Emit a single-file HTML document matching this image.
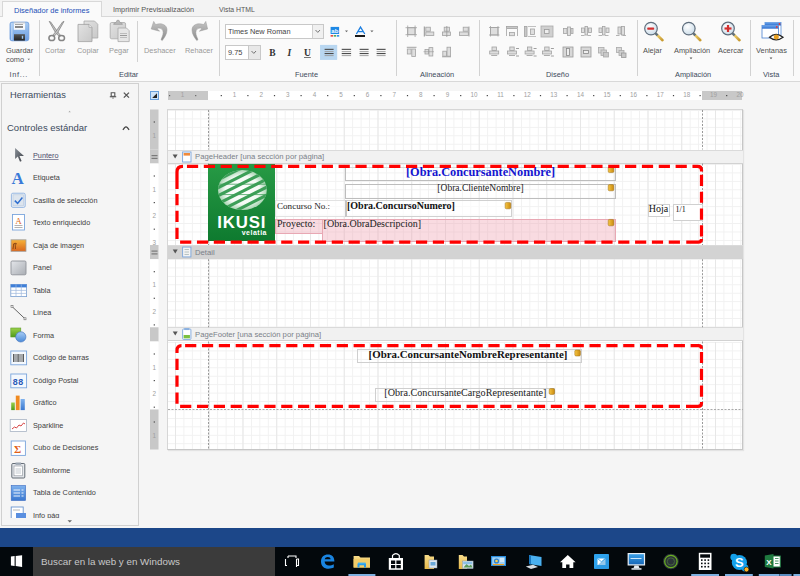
<!DOCTYPE html>
<html><head><meta charset="utf-8">
<style>
*{box-sizing:border-box;margin:0;padding:0}
html,body{width:800px;height:576px;overflow:hidden;background:#f5f5f5;font-family:"Liberation Sans",sans-serif;color:#333}
.a{position:absolute}
.t{position:absolute;white-space:nowrap;line-height:1}
.sep{position:absolute;width:1px;background:#d2d2d2}
.rl{font-size:7.4px;color:#505050}
.dis{color:#999}
.pi{font-size:7.3px;color:#404040}
.hd{font-size:7.7px;color:#7a7f88}
.grid{background-image:linear-gradient(to right,#e7e7e7 1px,transparent 1px),linear-gradient(to right,#f1f1f1 1px,transparent 1px),linear-gradient(to bottom,#f1f1f1 1px,transparent 1px);background-size:33.76px 100%,8.44px 100%,100% 8.44px}
.gl{font-size:7.4px;color:#404a5a}
</style></head><body>
<!-- tabs -->
<div class="a" style="left:0;top:0;width:800px;height:17px;background:#f3f3f3"></div>
<div class="a" style="left:0;top:16px;width:800px;height:1px;background:#d8d8d8"></div>
<div class="a" style="left:2px;top:1px;width:100px;height:16px;background:#fafafa;border:1px solid #d8d8d8;border-bottom:none"></div>
<div class="t" style="left:14px;top:6.5px;font-size:7.5px;color:#2350b8">Diseñador de informes</div>
<div class="t" style="left:113px;top:6px;font-size:7.3px;color:#555">Imprimir Previsualización</div>
<div class="t" style="left:219px;top:7.2px;font-size:6.9px;color:#555">Vista HTML</div>
<!-- ribbon -->
<div class="a" style="left:0;top:17px;width:800px;height:64px;background:#fafafa"></div>
<div class="a" style="left:0;top:81px;width:800px;height:1px;background:#d8d8d8"></div>

<div class="sep" style="left:39px;top:20px;height:56px"></div>
<div class="sep" style="left:137px;top:21px;height:41px"></div>
<div class="sep" style="left:219px;top:20px;height:56px"></div>
<div class="sep" style="left:396px;top:20px;height:56px"></div>
<div class="sep" style="left:479px;top:20px;height:56px"></div>
<div class="sep" style="left:637px;top:20px;height:56px"></div>
<div class="sep" style="left:750px;top:20px;height:56px"></div>
<div class="sep" style="left:793px;top:20px;height:56px"></div>

<div class="t rl" style="left:6px;top:47px">Guardar</div>
<div class="t rl" style="left:6px;top:56px">como</div>
<div class="t gl" style="left:9.5px;top:71px;letter-spacing:0.7px">Inf...</div>
<div class="t rl dis" style="left:45px;top:47px">Cortar</div>
<div class="t rl dis" style="left:77px;top:47px">Copiar</div>
<div class="t rl dis" style="left:109px;top:47px">Pegar</div>
<div class="t gl" style="left:119px;top:71px">Editar</div>
<div class="t rl dis" style="left:144px;top:47px">Deshacer</div>
<div class="t rl dis" style="left:185px;top:47px">Rehacer</div>
<div class="t gl" style="left:295px;top:71px">Fuente</div>
<div class="t gl" style="left:420px;top:71px">Alineación</div>
<div class="t gl" style="left:546px;top:71px">Diseño</div>
<div class="t rl" style="left:643px;top:47px">Alejar</div>
<div class="t rl" style="left:674px;top:47px">Ampliación</div>
<div class="t rl" style="left:718px;top:47px">Acercar</div>
<div class="t rl" style="left:756px;top:47px">Ventanas</div>
<div class="t gl" style="left:675px;top:71px">Ampliación</div>
<div class="t gl" style="left:763px;top:71px">Vista</div>

<!-- font combos -->
<div class="a" style="left:225px;top:24px;width:99px;height:15px;background:#fff;border:1px solid #c8c8c8"></div>
<div class="a" style="left:312px;top:25px;width:11px;height:13px;background:#f0f0f0;border-left:1px solid #d0d0d0"></div>
<div class="t" style="left:228px;top:28px;font-size:7.4px;color:#444">Times New Roman</div>
<div class="a" style="left:225px;top:45px;width:36px;height:15px;background:#fff;border:1px solid #c8c8c8"></div>
<div class="a" style="left:248px;top:46px;width:12px;height:13px;background:#e8e8e8;border-left:1px solid #c8c8c8"></div>
<div class="t" style="left:228px;top:49px;font-size:7.4px;color:#444">9.75</div>
<div class="a" style="left:320px;top:45px;width:17px;height:15px;background:#c5dcf2"></div>

<!-- ribbon icons -->
<svg class="a" style="left:0;top:0" width="800" height="82" viewBox="0 0 800 82">
<defs>
<linearGradient id="gBlue" x1="0" y1="0" x2="0" y2="1"><stop offset="0" stop-color="#a8cbf2"/><stop offset="1" stop-color="#6c9de0"/></linearGradient>
<linearGradient id="gDark" x1="0" y1="0" x2="0" y2="1"><stop offset="0" stop-color="#555"/><stop offset="1" stop-color="#222"/></linearGradient>
<linearGradient id="gGray" x1="0" y1="0" x2="1" y2="1"><stop offset="0" stop-color="#e2e2e2"/><stop offset="1" stop-color="#c8c8c8"/></linearGradient>
<linearGradient id="gArrow" x1="0" y1="0" x2="0" y2="1"><stop offset="0" stop-color="#c4c4c4"/><stop offset="1" stop-color="#8a8a8a"/></linearGradient>
<radialGradient id="gLens" cx="0.4" cy="0.35" r="0.7"><stop offset="0" stop-color="#ffffff"/><stop offset="1" stop-color="#c9dbe8"/></radialGradient>
<linearGradient id="gHandle" x1="0" y1="0" x2="1" y2="1"><stop offset="0" stop-color="#f5dc80"/><stop offset="1" stop-color="#c89a30"/></linearGradient>
<linearGradient id="gWin" x1="0" y1="0" x2="0" y2="1"><stop offset="0" stop-color="#6aa5ec"/><stop offset="1" stop-color="#2f6fcf"/></linearGradient>
</defs>
<!-- save -->
<rect x="10" y="22.1" width="18.8" height="18.7" rx="2" fill="url(#gBlue)" stroke="#6b9bdc" stroke-width="0.8"/>
<rect x="11" y="23" width="1.6" height="17" fill="#c4dcf8" opacity="0.7"/>
<rect x="13.8" y="22.5" width="11.3" height="7.3" fill="#f6f8fb"/>
<rect x="13.8" y="22.5" width="11.3" height="0.8" fill="#b8b8b8"/>
<rect x="15" y="24" width="8" height="0.9" fill="#9a9a9a"/>
<rect x="15" y="26.2" width="8" height="1.6" fill="#6a6a6a"/>
<rect x="14" y="34.2" width="10.9" height="6.4" fill="url(#gDark)"/>
<rect x="21.8" y="35.8" width="1.4" height="3" fill="#9cc8f0"/>
<!-- scissors -->
<g stroke="#7a7a7a" stroke-width="0.7" fill="#c4c4c4" stroke-linejoin="round">
<path d="M49.2 21.4 L50.6 21.9 L57.6 31.8 L60.4 35.2 L58.8 36 L55.4 32.4 Z"/>
<path d="M64 21.4 L62.6 21.9 L55.6 31.8 L52.8 35.2 L54.4 36 L57.8 32.4 Z"/>
</g>
<g stroke="#858585" stroke-width="1.5" fill="none">
<ellipse cx="51.8" cy="38" rx="2.9" ry="2.6"/><ellipse cx="61.6" cy="38" rx="2.9" ry="2.6"/>
</g>
<!-- copy -->
<path d="M84 21 H94.5 L97.8 24.3 V38 H84 Z" fill="url(#gGray)" stroke="#a8a8a8" stroke-width="0.8"/>
<path d="M78 24.4 H89 L92 27.4 V41.6 H78 Z" fill="url(#gGray)" stroke="#a0a0a0" stroke-width="0.8"/>
<path d="M89 24.4 V27.4 H92" fill="#f0f0f0" stroke="#a0a0a0" stroke-width="0.7"/>
<!-- paste -->
<rect x="110.2" y="22.5" width="15.4" height="16.3" rx="1.5" fill="url(#gGray)" stroke="#a8a8a8" stroke-width="0.8"/>
<path d="M113.6 24.4 Q113.6 22.6 116 22.6 L117 20.3 H119 L120 22.6 Q122.4 22.6 122.4 24.4 Z" fill="#b8b8b8" stroke="#999" stroke-width="0.6"/>
<path d="M118 28 H126.5 L129.2 30.7 V41.6 H118 Z" fill="#e6e6e6" stroke="#a8a8a8" stroke-width="0.8"/>
<rect x="120" y="33" width="7" height="0.7" fill="#aaa"/><rect x="120" y="35" width="7" height="1" fill="#999"/><rect x="120" y="37.3" width="7" height="0.7" fill="#aaa"/>
<!-- undo -->
<path d="M151.2 29 L153.7 21.4 L155.6 24.6 C161 22.5 167 24.5 167 30 C167 34 164.5 37.5 162.2 40.6 L161 39.6 C162.6 36 163.8 33 162.8 30.5 C161.8 28 158.5 27.5 157 28.6 L159.6 31.2 Z" fill="url(#gArrow)" stroke="#9a9a9a" stroke-width="0.5"/>
<!-- redo -->
<path d="M207.6 29 L205.8 21.4 L203.6 24.6 C198 22.5 192 24.5 192 30 C192 34 194.5 37.5 196.8 40.6 L198 39.6 C196.4 36 195.2 33 196.2 30.5 C197.2 28 200.5 27.5 202 28.6 L199.4 31.2 Z" fill="url(#gArrow)" stroke="#9a9a9a" stroke-width="0.5"/>
<!-- font combo arrows -->
<path d="M315.5 30 L317.8 32.4 L320 30" stroke="#666" stroke-width="0.9" fill="none"/>
<path d="M251.5 51 L253.8 53.4 L256 51" stroke="#666" stroke-width="0.9" fill="none"/>
<!-- highlight -->
<rect x="330.6" y="26.9" width="8.5" height="7.1" fill="#1e88e5"/>
<text x="331.3" y="33" font-family="Liberation Sans" font-size="6" font-weight="bold" fill="#fff">ab</text>
<rect x="330.6" y="35.1" width="2.4" height="1.5" fill="#e53935"/><rect x="333.7" y="35.1" width="2.4" height="1.5" fill="#43a047"/><rect x="336.8" y="35.1" width="2.4" height="1.5" fill="#1e88e5"/>
<path d="M345 30.6 H348 L346.5 32.2 Z" fill="#666"/>
<!-- font color A -->
<path d="M356.4 34 L360.5 27.1 L364.8 34 M358 31.6 H363" stroke="#1e7fe0" stroke-width="1.3" fill="none"/>
<rect x="355" y="35.1" width="10" height="1.8" fill="#000"/>
<path d="M370.3 30.6 H373.5 L371.9 32.2 Z" fill="#666"/>
<!-- B I U -->
<text x="269.2" y="56.3" font-family="Liberation Serif" font-size="9.5" font-weight="bold" fill="#333">B</text>
<text x="287.5" y="56.3" font-family="Liberation Serif" font-size="9.5" font-style="italic" font-weight="bold" fill="#333">I</text>
<text x="304" y="56" font-family="Liberation Serif" font-size="9.5" font-weight="bold" fill="#333">U</text>
<rect x="304" y="57.2" width="6.8" height="0.8" fill="#555"/>
<!-- align -->
<rect x="320.2" y="44.9" width="17" height="14.7" fill="#b9d7f1"/>
<g><rect x="324.6" y="48.8" width="9" height="1.1" fill="#4a4a4a"/><rect x="324.6" y="51.2" width="9" height="0.9" fill="#9a9a9a"/><rect x="324.6" y="53" width="9" height="1.1" fill="#4a4a4a"/><rect x="324.6" y="55.2" width="9" height="0.9" fill="#9a9a9a"/><rect x="341.7" y="48.8" width="9.4" height="1.1" fill="#4a4a4a"/><rect x="341.7" y="51.2" width="9.4" height="0.9" fill="#9a9a9a"/><rect x="341.7" y="53" width="9.4" height="1.1" fill="#4a4a4a"/><rect x="341.7" y="55.2" width="9.4" height="0.9" fill="#9a9a9a"/><rect x="359.6" y="48.8" width="9" height="1.1" fill="#4a4a4a"/><rect x="359.6" y="51.2" width="9" height="0.9" fill="#9a9a9a"/><rect x="359.6" y="53" width="9" height="1.1" fill="#4a4a4a"/><rect x="359.6" y="55.2" width="9" height="0.9" fill="#9a9a9a"/><rect x="376.6" y="48.8" width="9" height="1.1" fill="#4a4a4a"/><rect x="376.6" y="51.2" width="9" height="0.9" fill="#9a9a9a"/><rect x="376.6" y="53" width="9" height="1.1" fill="#4a4a4a"/><rect x="376.6" y="55.2" width="9" height="0.9" fill="#9a9a9a"/></g>
<!-- zoom lenses -->
<g>
<path d="M655.8 33.6 L662.5 40.2" stroke="url(#gHandle)" stroke-width="2.6" stroke-linecap="round"/>
<path d="M655.2 33 L657.6 35.4" stroke="#607080" stroke-width="2.4"/>
<circle cx="651" cy="28.6" r="6.3" fill="url(#gLens)" stroke="#5f6e7d" stroke-width="1.2"/>
<rect x="647.2" y="27.6" width="7" height="2.2" rx="0.8" fill="#d32f2f"/>
</g>
<g>
<path d="M693.6 33.6 L700.3 40.2" stroke="url(#gHandle)" stroke-width="2.6" stroke-linecap="round"/>
<path d="M693 33 L695.4 35.4" stroke="#607080" stroke-width="2.4"/>
<circle cx="688.8" cy="28.6" r="6.3" fill="url(#gLens)" stroke="#5f6e7d" stroke-width="1.2"/>
</g>
<g>
<path d="M732.8 33.6 L739.5 40.2" stroke="url(#gHandle)" stroke-width="2.6" stroke-linecap="round"/>
<path d="M732.2 33 L734.6 35.4" stroke="#607080" stroke-width="2.4"/>
<circle cx="728" cy="28.5" r="6.3" fill="url(#gLens)" stroke="#5f6e7d" stroke-width="1.2"/>
<rect x="724.5" y="27.4" width="7" height="2.2" fill="#d32f2f"/><rect x="726.9" y="25" width="2.2" height="7" fill="#d32f2f"/>
</g>
<!-- ventanas -->
<rect x="765" y="22.5" width="16" height="13" fill="#fff" stroke="#5b8fd8" stroke-width="0.8"/>
<rect x="765" y="22.5" width="16" height="3" fill="url(#gWin)"/>
<circle cx="779.5" cy="24" r="0.9" fill="#e53935"/>
<rect x="762" y="25.5" width="16.5" height="12.5" fill="#fff" stroke="#4a80d0" stroke-width="0.8"/>
<rect x="762" y="25.5" width="16.5" height="3.2" fill="url(#gWin)"/>
<circle cx="776.8" cy="27" r="0.9" fill="#e53935"/>
<path d="M769.5 37.2 Q776 31.5 783 37.2 Q776 42.5 769.5 37.2 Z" fill="#fff" stroke="#222" stroke-width="1.3"/>
<circle cx="776.3" cy="37" r="2.5" fill="#e8a020"/>
<!-- dropdown carets -->
<path d="M27.5 58.8 H30 L28.75 60 Z" fill="#666"/>
<path d="M689.6 57.6 H692.4 L691 59.2 Z" fill="#555"/>
<path d="M769.6 57.6 H772.4 L771 59.2 Z" fill="#555"/>
</svg>

<svg class="a" style="left:0;top:0" width="800" height="82" viewBox="0 0 800 82"><rect x="407.7" y="27.7" width="7.4" height="7" fill="#dedede" stroke="#a2a2a2" stroke-width="0.8"/><line x1="405.5" y1="27.7" x2="417" y2="27.7" stroke="#a2a2a2" stroke-width="0.8"/><line x1="405.5" y1="34.7" x2="417" y2="34.7" stroke="#a2a2a2" stroke-width="0.8"/><line x1="407.7" y1="25.5" x2="407.7" y2="37" stroke="#a2a2a2" stroke-width="0.8"/><line x1="415.1" y1="25.5" x2="415.1" y2="37" stroke="#a2a2a2" stroke-width="0.8"/><line x1="424.3" y1="26.5" x2="424.3" y2="36.5" stroke="#909090" stroke-width="1"/><rect x="425.8" y="27.2" width="4.5" height="4" fill="#dedede" stroke="#a2a2a2" stroke-width="0.8"/><rect x="425.8" y="32" width="8" height="3.5" fill="#dedede" stroke="#a2a2a2" stroke-width="0.8"/><rect x="444.2" y="27.2" width="5.2" height="4" fill="#dedede" stroke="#a2a2a2" stroke-width="0.8"/><rect x="442.4" y="32" width="8" height="3.5" fill="#dedede" stroke="#a2a2a2" stroke-width="0.8"/><line x1="446.8" y1="26" x2="446.8" y2="37" stroke="#999" stroke-width="0.8"/><rect x="463.2" y="27.2" width="5" height="4" fill="#dedede" stroke="#a2a2a2" stroke-width="0.8"/><rect x="459.5" y="32" width="8.8" height="3.5" fill="#dedede" stroke="#a2a2a2" stroke-width="0.8"/><line x1="469" y1="26.5" x2="469" y2="36.5" stroke="#909090" stroke-width="0.8"/><line x1="406.8" y1="47.3" x2="416.5" y2="47.3" stroke="#999" stroke-width="0.9"/><rect x="407.3" y="49" width="3.8" height="5" fill="#dedede" stroke="#a2a2a2" stroke-width="0.8"/><rect x="411.8" y="49" width="3.8" height="7.5" fill="#dedede" stroke="#a2a2a2" stroke-width="0.8"/><rect x="425" y="49.5" width="3.6" height="4.5" fill="#dedede" stroke="#a2a2a2" stroke-width="0.8"/><rect x="429" y="47.6" width="3.8" height="8.4" fill="#dedede" stroke="#a2a2a2" stroke-width="0.8"/><line x1="423.5" y1="51.7" x2="434" y2="51.7" stroke="#999" stroke-width="0.6"/><rect x="442.8" y="51.2" width="3.8" height="5" fill="#dedede" stroke="#a2a2a2" stroke-width="0.8"/><rect x="447" y="47.2" width="3.6" height="9" fill="#dedede" stroke="#a2a2a2" stroke-width="0.8"/><line x1="442" y1="56.8" x2="451" y2="56.8" stroke="#999" stroke-width="0.8"/><rect x="490.5" y="27.5" width="7.5" height="7.5" fill="#dedede" stroke="#a2a2a2" stroke-width="0.8"/><line x1="489" y1="27.5" x2="499.5" y2="27.5" stroke="#a2a2a2" stroke-width="0.8"/><line x1="489" y1="35" x2="499.5" y2="35" stroke="#a2a2a2" stroke-width="0.8"/><line x1="490.5" y1="26" x2="490.5" y2="36.5" stroke="#a2a2a2" stroke-width="0.8"/><line x1="498" y1="26" x2="498" y2="36.5" stroke="#a2a2a2" stroke-width="0.8"/><rect x="506.5" y="26.5" width="11" height="2" fill="#c8c8c8" stroke="#a2a2a2" stroke-width="0.8"/><line x1="506.5" y1="29" x2="506.5" y2="36" stroke="#a2a2a2" stroke-width="0.8"/><line x1="517.5" y1="29" x2="517.5" y2="36" stroke="#a2a2a2" stroke-width="0.8"/><rect x="509.5" y="32.5" width="5" height="3.2" fill="#dedede" stroke="#a2a2a2" stroke-width="0.8"/><rect x="524.5" y="26.5" width="2.5" height="10" fill="#c8c8c8" stroke="#a2a2a2" stroke-width="0.8"/><rect x="530.5" y="29" width="4" height="5.5" fill="#dedede" stroke="#a2a2a2" stroke-width="0.8"/><line x1="528" y1="26.5" x2="536" y2="26.5" stroke="#999" stroke-width="0.6"/><line x1="528" y1="36.5" x2="536" y2="36.5" stroke="#999" stroke-width="0.6"/><rect x="541" y="26" width="12" height="11" fill="#d0d0d0" stroke="#aaa" stroke-width="0.8"/><rect x="544.5" y="29.5" width="4.5" height="4" fill="#eee" stroke="#999" stroke-width="0.8"/><rect x="563.5" y="28.5" width="3.5" height="5" fill="#ddd" stroke="#a2a2a2" stroke-width="0.8"/><rect x="567.5" y="27" width="3" height="8.5" fill="#dedede" stroke="#a2a2a2" stroke-width="0.8"/><rect x="571" y="28.5" width="2" height="5" fill="#ddd" stroke="#a2a2a2" stroke-width="0.8"/><rect x="581.5" y="28" width="3" height="4.5" fill="#dedede" stroke="#a2a2a2" stroke-width="0.8"/><rect x="585" y="26.5" width="2.5" height="8.5" fill="#dedede" stroke="#a2a2a2" stroke-width="0.8"/><rect x="588.5" y="28" width="3" height="4.5" fill="#dedede" stroke="#a2a2a2" stroke-width="0.8"/><line x1="581" y1="35.5" x2="584.5" y2="35.5" stroke="#a2a2a2" stroke-width="0.8"/><line x1="587.5" y1="35.5" x2="591" y2="35.5" stroke="#a2a2a2" stroke-width="0.8"/><rect x="599" y="28" width="3" height="4.5" fill="#dedede" stroke="#a2a2a2" stroke-width="0.8"/><rect x="602.5" y="26.5" width="2.5" height="8.5" fill="#dedede" stroke="#a2a2a2" stroke-width="0.8"/><rect x="606" y="28" width="3" height="4.5" fill="#dedede" stroke="#a2a2a2" stroke-width="0.8"/><line x1="598.5" y1="35.5" x2="602" y2="35.5" stroke="#a2a2a2" stroke-width="0.8"/><line x1="605" y1="35.5" x2="608.5" y2="35.5" stroke="#a2a2a2" stroke-width="0.8"/><rect x="618" y="27" width="3" height="7" fill="#dedede" stroke="#a2a2a2" stroke-width="0.8"/><rect x="621.5" y="26.5" width="3" height="8.5" fill="#dedede" stroke="#a2a2a2" stroke-width="0.8"/><line x1="616" y1="35.5" x2="619.5" y2="35.5" stroke="#a2a2a2" stroke-width="0.8"/><line x1="622.5" y1="35.5" x2="626" y2="35.5" stroke="#a2a2a2" stroke-width="0.8"/><rect x="492.0" y="47" width="4.4" height="3.5" fill="#dedede" stroke="#a2a2a2" stroke-width="0.8"/><rect x="489.7" y="51" width="9" height="3" fill="#dedede" stroke="#a2a2a2" stroke-width="0.8"/><line x1="491.2" y1="55.5" x2="497.2" y2="55.5" stroke="#999" stroke-width="0.8"/><rect x="509.8" y="47" width="4.4" height="3.5" fill="#dedede" stroke="#a2a2a2" stroke-width="0.8"/><rect x="507.5" y="51" width="9" height="3" fill="#dedede" stroke="#a2a2a2" stroke-width="0.8"/><line x1="509" y1="55.5" x2="515" y2="55.5" stroke="#999" stroke-width="0.8"/><line x1="516" y1="48.5" x2="519" y2="48.5" stroke="#888" stroke-width="0.8"/><line x1="516" y1="56" x2="519" y2="56" stroke="#888" stroke-width="0.8"/><rect x="527.4" y="47" width="4.4" height="3.5" fill="#dedede" stroke="#a2a2a2" stroke-width="0.8"/><rect x="525.1" y="51" width="9" height="3" fill="#dedede" stroke="#a2a2a2" stroke-width="0.8"/><line x1="526.6" y1="55.5" x2="532.6" y2="55.5" stroke="#999" stroke-width="0.8"/><line x1="533.6" y1="48.5" x2="536.6" y2="48.5" stroke="#888" stroke-width="0.8"/><line x1="533.6" y1="56" x2="536.6" y2="56" stroke="#888" stroke-width="0.8"/><rect x="544.6999999999999" y="47" width="4.4" height="3.5" fill="#dedede" stroke="#a2a2a2" stroke-width="0.8"/><rect x="542.4" y="51" width="9" height="3" fill="#dedede" stroke="#a2a2a2" stroke-width="0.8"/><line x1="543.9" y1="55.5" x2="549.9" y2="55.5" stroke="#999" stroke-width="0.8"/><line x1="550.9" y1="48.5" x2="553.9" y2="48.5" stroke="#888" stroke-width="0.8"/><line x1="550.9" y1="56" x2="553.9" y2="56" stroke="#888" stroke-width="0.8"/><rect x="563" y="47" width="10" height="10" fill="#d8d8d8" stroke="#999" stroke-width="0.8"/><rect x="566.5" y="48.5" width="3" height="7" fill="#eee" stroke="#888" stroke-width="0.8"/><rect x="581" y="47" width="10" height="10" fill="#d8d8d8" stroke="#999" stroke-width="0.8"/><rect x="583.5" y="50.5" width="5" height="3" fill="#eee" stroke="#888" stroke-width="0.8"/><rect x="598.5" y="47.5" width="5.5" height="5.5" fill="#d8d8d8" stroke="#aaa" stroke-width="0.8"/><rect x="601" y="50" width="5.5" height="5.5" fill="#cfcfcf" stroke="#aaa" stroke-width="0.8"/><rect x="603.5" y="52.5" width="5" height="4.5" fill="#c8c8c8" stroke="#aaa" stroke-width="0.8"/><rect x="616.5" y="47.5" width="5" height="5" fill="#d8d8d8" stroke="#aaa" stroke-width="0.8"/><rect x="619" y="50.5" width="5" height="5" fill="#cfcfcf" stroke="#aaa" stroke-width="0.8"/><rect x="621.5" y="53" width="4.5" height="4.5" fill="#c8c8c8" stroke="#999" stroke-width="0.8"/></svg>

<!-- left panel -->
<div class="a" style="left:1px;top:83px;width:138px;height:443px;background:#f5f5f5;border:1px solid #d0d0d0"></div>
<div class="t" style="left:10px;top:91px;font-size:9.3px;color:#3c4a5c">Herramientas</div>
<div class="t" style="left:7px;top:123px;font-size:9.5px;color:#3c4a5c">Controles estándar</div>

<div class="a" style="left:2px;top:84px;width:136px;height:434px;overflow:hidden">
<div class="a" style="left:-2px;top:-84px;width:140px;height:526px">
<div class="t pi" style="left:33px;top:151.5px;text-decoration:underline;text-decoration-color:#8a8aa0;color:#4a4a6a;">Puntero</div>
<div class="t pi" style="left:33px;top:174.0px;">Etiqueta</div>
<div class="t pi" style="left:33px;top:196.5px;">Casilla de selección</div>
<div class="t pi" style="left:33px;top:219.0px;">Texto enriquecido</div>
<div class="t pi" style="left:33px;top:241.5px;">Caja de imagen</div>
<div class="t pi" style="left:33px;top:264.0px;">Panel</div>
<div class="t pi" style="left:33px;top:286.5px;">Tabla</div>
<div class="t pi" style="left:33px;top:309.0px;">Línea</div>
<div class="t pi" style="left:33px;top:331.5px;">Forma</div>
<div class="t pi" style="left:33px;top:354.0px;">Código de barras</div>
<div class="t pi" style="left:33px;top:376.5px;">Código Postal</div>
<div class="t pi" style="left:33px;top:399.0px;">Gráfico</div>
<div class="t pi" style="left:33px;top:421.5px;">Sparkline</div>
<div class="t pi" style="left:33px;top:444.0px;">Cubo de Decisiones</div>
<div class="t pi" style="left:33px;top:466.5px;">Subinforme</div>
<div class="t pi" style="left:33px;top:489.0px;">Tabla de Contenido</div>
<div class="t pi" style="left:33px;top:511.5px;">Info pág</div>

<svg class="a" style="left:0;top:140px" width="140" height="386" viewBox="0 140 140 386">
<defs>
<linearGradient id="pPtr" x1="0" y1="0" x2="1" y2="1"><stop offset="0" stop-color="#8a9098"/><stop offset="1" stop-color="#3c4046"/></linearGradient>
<linearGradient id="pPanel" x1="0" y1="0" x2="1" y2="1"><stop offset="0" stop-color="#e4e6ea"/><stop offset="1" stop-color="#a9adb3"/></linearGradient>
<linearGradient id="pImg" x1="0" y1="0" x2="0" y2="1"><stop offset="0" stop-color="#f6b23a"/><stop offset="1" stop-color="#d9661c"/></linearGradient>
<linearGradient id="pBlue" x1="0" y1="0" x2="0" y2="1"><stop offset="0" stop-color="#7fb2ee"/><stop offset="1" stop-color="#3a78d0"/></linearGradient>
<linearGradient id="pCirc" x1="0" y1="0" x2="0" y2="1"><stop offset="0" stop-color="#a9cdf5"/><stop offset="1" stop-color="#4a8ad8"/></linearGradient>
<linearGradient id="pGreen" x1="0" y1="0" x2="0" y2="1"><stop offset="0" stop-color="#9bd04a"/><stop offset="1" stop-color="#4f9a1a"/></linearGradient>
</defs>
<!-- pointer -->
<path d="M15.1 148 L15.1 159 L17.8 156.6 L20 161.8 L21.6 161 L19.5 156 L24 156 Z" fill="url(#pPtr)"/>
<!-- A label -->
<text x="11.6" y="184.2" font-family="Liberation Serif" font-size="17" font-weight="bold" fill="#3a7ad8">A</text>
<!-- checkbox -->
<rect x="11.4" y="193.2" width="13.8" height="14.2" rx="1.5" fill="#e8eef6" stroke="#8fb2e0" stroke-width="0.9"/>
<rect x="13" y="194.8" width="10.6" height="11" fill="#dde5ee" stroke="#b9c9dc" stroke-width="0.6"/>
<path d="M14.8 200.6 L17.6 203.4 L22.4 197.6" stroke="#2f6fd0" stroke-width="1.5" fill="none"/>
<!-- rich text -->
<rect x="12.5" y="214.5" width="12" height="15.5" fill="#fff" stroke="#7aa5dc" stroke-width="0.9"/>
<text x="15.2" y="224" font-family="Liberation Serif" font-size="9" fill="#e06a20">A</text>
<rect x="14.5" y="225.2" width="8" height="0.8" fill="#a0a0a0"/><rect x="14.5" y="227.2" width="8" height="0.8" fill="#a0a0a0"/>
<!-- image box -->
<rect x="11" y="239.8" width="15" height="11.5" fill="url(#pImg)" stroke="#a0a0a0" stroke-width="0.8"/>
<path d="M13 249 L13.8 244 M15.5 249 L15.2 243.5 M13 244.5 Q15 242 17 244" stroke="#7a3a10" stroke-width="0.8" fill="none"/>
<!-- panel -->
<rect x="11" y="261" width="15" height="13.8" rx="1.2" fill="url(#pPanel)" stroke="#8e9298" stroke-width="0.9"/>
<!-- table -->
<rect x="10.8" y="284.4" width="15.8" height="12.2" fill="#fff" stroke="#7a9fd0" stroke-width="0.8"/>
<rect x="10.8" y="284.4" width="15.8" height="3" fill="#3f7fd8"/>
<path d="M10.8 290.4 H26.6 M10.8 293.4 H26.6 M16 284.4 V296.6 M21.3 284.4 V296.6" stroke="#9db8dc" stroke-width="0.7"/>
<!-- line -->
<line x1="12" y1="306.5" x2="25" y2="318.8" stroke="#555" stroke-width="0.9"/>
<rect x="11" y="305.5" width="2" height="2" fill="#fff" stroke="#666" stroke-width="0.6"/>
<rect x="24" y="317.8" width="2" height="2" fill="#fff" stroke="#666" stroke-width="0.6"/>
<!-- shape -->
<rect x="10.8" y="328" width="10" height="9" fill="url(#pGreen)" stroke="#5a9a2a" stroke-width="0.6"/>
<circle cx="20.8" cy="336.9" r="5.1" fill="url(#pCirc)" stroke="#4a7ac0" stroke-width="0.7"/>
<!-- barcode -->
<rect x="10.8" y="351" width="15.8" height="13.8" fill="#f4f8fd" stroke="#7aa5dc" stroke-width="0.9"/>
<path d="M13.5 354 V362 M15 354 V362 M17 354 V362 M18.3 354 V362 M20 354 V362 M22 354 V362 M23.5 354 V362" stroke="#333" stroke-width="0.8"/>
<!-- postal -->
<rect x="10.8" y="374" width="15.8" height="13.8" fill="#f4f8fd" stroke="#7aa5dc" stroke-width="0.9"/>
<text x="12.6" y="384.6" font-family="Liberation Mono" font-size="9" font-weight="bold" fill="#2a5ab8">88</text>
<!-- chart -->
<rect x="11.2" y="402.5" width="3.6" height="7.6" fill="url(#pGreen)"/>
<rect x="15.8" y="395.6" width="3.8" height="14.5" fill="#f08a20"/>
<rect x="20.6" y="399" width="4.2" height="11.1" fill="url(#pBlue)"/>
<!-- sparkline -->
<rect x="10.2" y="419.5" width="16.4" height="12" fill="#fff" stroke="#a8b4c4" stroke-width="0.8"/>
<path d="M12 429 L14.5 427 L16.5 428 L19 425 L21 426 L23.5 423 L25 424" stroke="#d03030" stroke-width="0.9" fill="none"/>
<!-- cube sigma -->
<rect x="11.2" y="441" width="14.2" height="14.4" fill="#fff" stroke="#7aa5dc" stroke-width="0.9"/>
<text x="14" y="452.6" font-family="Liberation Serif" font-size="11" font-weight="bold" fill="#e0601a">Σ</text>
<!-- subreport -->
<rect x="11.8" y="463.5" width="13" height="14.5" rx="1" fill="#e4e7eb" stroke="#555d68" stroke-width="0.9"/>
<rect x="14" y="466" width="8.6" height="9.8" fill="#fff" stroke="#8a9098" stroke-width="0.6"/>
<rect x="15.5" y="462.5" width="5.6" height="2.3" fill="#9aa4b0"/>
<path d="M15.5 469 H21 M15.5 471 H21 M15.5 473 H21" stroke="#9aa4b0" stroke-width="0.6"/>
<!-- toc -->
<rect x="11.2" y="485.5" width="14.4" height="15" fill="url(#pBlue)" stroke="#3a6ac0" stroke-width="0.6"/>
<path d="M13.5 490 H20 M13.5 493 H20 M13.5 496 H20 M21.5 490 H23.5 M21.5 493 H23.5 M21.5 496 H23.5" stroke="#fff" stroke-width="0.9"/>
<!-- info pag (clipped) -->
<rect x="11.2" y="507" width="12" height="12" fill="#fff" stroke="#6a95d0" stroke-width="0.9"/>
<rect x="16" y="513" width="10" height="5" fill="#5a8fe0"/>
<path d="M13 510 H20" stroke="#999" stroke-width="0.7"/>
</svg>

</div></div>

<svg class="a" style="left:0;top:84px" width="140" height="60" viewBox="0 84 140 60">
<path d="M111.2 92.8 H114.8 V96.2 H111.2 Z" fill="#fff" stroke="#555" stroke-width="1.1"/><rect x="109.8" y="96.2" width="6.4" height="1.1" fill="#555"/><rect x="112.5" y="97.3" width="1" height="1.6" fill="#777"/>
<path d="M123.8 92.6 L129 97.6 M129 92.6 L123.8 97.6" stroke="#555" stroke-width="1.3"/>
<path d="M68.4 112.3 H70.8 L69.6 110.8 Z" fill="#aaa"/>
<path d="M122.9 129.8 L124.6 127.6 Q126 126 127.4 127.6 L129.1 129.8" stroke="#444" stroke-width="1.3" fill="none" stroke-linejoin="round"/>
</svg>
<svg class="a" style="left:66px;top:519px" width="8" height="5" viewBox="0 0 8 5"><path d="M1.5 1.2 H6 L3.75 3.6 Z" fill="#666"/></svg>

<!-- design surface -->
<div class="a" style="left:150px;top:91px;width:9px;height:9px;background:#cfe3f7;border:1px solid #6aa0dc"></div>
<svg class="a" style="left:150px;top:91px" width="9" height="9"><path d="M2.2 7 L7 7 L7 2.2 Z" fill="#222"/></svg>
<div class="a" style="left:168px;top:91px;width:574px;height:9px;background:#c8c8c8"></div>
<div class="a" style="left:208px;top:91px;width:494px;height:9px;background:#fff"></div>
<svg class="a" style="left:0;top:88px" width="800" height="16" viewBox="0 88 800 16">
<rect x="169" y="95" width="1.2" height="1.2" fill="#666"/>
<text x="182.6" y="97.2" font-family="Liberation Sans" font-size="6.3" fill="#a0a0a0" text-anchor="middle">1</text>
<rect x="195.1" y="95" width="1.2" height="1.2" fill="#666"/>
<rect x="220.7" y="95" width="1.2" height="1.2" fill="#444"/>
<text x="234.6" y="97.2" font-family="Liberation Sans" font-size="6.3" fill="#a0a0a0" text-anchor="middle">1</text>
<rect x="247.3" y="95" width="1.2" height="1.2" fill="#444"/>
<text x="261.2" y="97.2" font-family="Liberation Sans" font-size="6.3" fill="#a0a0a0" text-anchor="middle">2</text>
<rect x="273.9" y="95" width="1.2" height="1.2" fill="#444"/>
<text x="287.8" y="97.2" font-family="Liberation Sans" font-size="6.3" fill="#a0a0a0" text-anchor="middle">3</text>
<rect x="300.5" y="95" width="1.2" height="1.2" fill="#444"/>
<text x="314.4" y="97.2" font-family="Liberation Sans" font-size="6.3" fill="#a0a0a0" text-anchor="middle">4</text>
<rect x="327.1" y="95" width="1.2" height="1.2" fill="#444"/>
<text x="341.0" y="97.2" font-family="Liberation Sans" font-size="6.3" fill="#a0a0a0" text-anchor="middle">5</text>
<rect x="353.7" y="95" width="1.2" height="1.2" fill="#444"/>
<text x="367.6" y="97.2" font-family="Liberation Sans" font-size="6.3" fill="#a0a0a0" text-anchor="middle">6</text>
<rect x="380.3" y="95" width="1.2" height="1.2" fill="#444"/>
<text x="394.2" y="97.2" font-family="Liberation Sans" font-size="6.3" fill="#a0a0a0" text-anchor="middle">7</text>
<rect x="406.9" y="95" width="1.2" height="1.2" fill="#444"/>
<text x="420.8" y="97.2" font-family="Liberation Sans" font-size="6.3" fill="#a0a0a0" text-anchor="middle">8</text>
<rect x="433.5" y="95" width="1.2" height="1.2" fill="#444"/>
<text x="447.4" y="97.2" font-family="Liberation Sans" font-size="6.3" fill="#a0a0a0" text-anchor="middle">9</text>
<rect x="460.1" y="95" width="1.2" height="1.2" fill="#444"/>
<text x="474.0" y="97.2" font-family="Liberation Sans" font-size="6.3" fill="#a0a0a0" text-anchor="middle">10</text>
<rect x="486.7" y="95" width="1.2" height="1.2" fill="#444"/>
<text x="500.6" y="97.2" font-family="Liberation Sans" font-size="6.3" fill="#a0a0a0" text-anchor="middle">11</text>
<rect x="513.3" y="95" width="1.2" height="1.2" fill="#444"/>
<text x="527.2" y="97.2" font-family="Liberation Sans" font-size="6.3" fill="#a0a0a0" text-anchor="middle">12</text>
<rect x="539.9" y="95" width="1.2" height="1.2" fill="#444"/>
<text x="553.8" y="97.2" font-family="Liberation Sans" font-size="6.3" fill="#a0a0a0" text-anchor="middle">13</text>
<rect x="566.5" y="95" width="1.2" height="1.2" fill="#444"/>
<text x="580.4" y="97.2" font-family="Liberation Sans" font-size="6.3" fill="#a0a0a0" text-anchor="middle">14</text>
<rect x="593.1" y="95" width="1.2" height="1.2" fill="#444"/>
<text x="607.0" y="97.2" font-family="Liberation Sans" font-size="6.3" fill="#a0a0a0" text-anchor="middle">15</text>
<rect x="619.7" y="95" width="1.2" height="1.2" fill="#444"/>
<text x="633.6" y="97.2" font-family="Liberation Sans" font-size="6.3" fill="#a0a0a0" text-anchor="middle">16</text>
<rect x="646.3" y="95" width="1.2" height="1.2" fill="#444"/>
<text x="660.2" y="97.2" font-family="Liberation Sans" font-size="6.3" fill="#a0a0a0" text-anchor="middle">17</text>
<rect x="672.9" y="95" width="1.2" height="1.2" fill="#444"/>
<text x="686.8" y="97.2" font-family="Liberation Sans" font-size="6.3" fill="#a0a0a0" text-anchor="middle">18</text>
<rect x="699.5" y="95" width="1.2" height="1.2" fill="#444"/>
<text x="713.4" y="97.2" font-family="Liberation Sans" font-size="6.3" fill="#a0a0a0" text-anchor="middle">19</text>
<rect x="726.1" y="95" width="1.2" height="1.2" fill="#444"/>
<text x="740.0" y="97.2" font-family="Liberation Sans" font-size="6.3" fill="#a0a0a0" text-anchor="middle">20</text>
</svg>
<svg class="a" style="left:150px;top:0" width="9" height="576" viewBox="150 0 9 576">
<rect x="150" y="109.5" width="8.5" height="40.0" fill="#c8c8c8"/>
<rect x="153.7" y="121.4" width="1.2" height="1.2" fill="#444"/>
<text x="154.3" y="137.6" font-family="Liberation Sans" font-size="6.3" fill="#a0a0a0" text-anchor="middle">1</text>
<rect x="150" y="149.5" width="8.5" height="14.0" fill="#c8c8c8"/>
<rect x="151.5" y="155" width="6" height="1.2" fill="#7a7a7a"/><rect x="151.5" y="157.8" width="6" height="1.2" fill="#7a7a7a"/>
<rect x="150" y="163.5" width="8.5" height="81.5" fill="#fff"/>
<rect x="153.7" y="175.4" width="1.2" height="1.2" fill="#444"/>
<text x="154.3" y="191.6" font-family="Liberation Sans" font-size="6.3" fill="#a0a0a0" text-anchor="middle">1</text>
<rect x="153.7" y="202.0" width="1.2" height="1.2" fill="#444"/>
<text x="154.3" y="218.2" font-family="Liberation Sans" font-size="6.3" fill="#a0a0a0" text-anchor="middle">2</text>
<rect x="153.7" y="228.6" width="1.2" height="1.2" fill="#444"/>
<text x="154.3" y="244.8" font-family="Liberation Sans" font-size="6.3" fill="#a0a0a0" text-anchor="middle">3</text>
<rect x="150" y="245" width="8.5" height="14.2" fill="#c8c8c8"/>
<rect x="151.5" y="250.5" width="6" height="1.2" fill="#7a7a7a"/><rect x="151.5" y="253.3" width="6" height="1.2" fill="#7a7a7a"/>
<rect x="150" y="259.2" width="8.5" height="68.1" fill="#fff"/>
<rect x="153.7" y="271.1" width="1.2" height="1.2" fill="#444"/>
<text x="154.3" y="287.3" font-family="Liberation Sans" font-size="6.3" fill="#a0a0a0" text-anchor="middle">1</text>
<rect x="153.7" y="297.7" width="1.2" height="1.2" fill="#444"/>
<text x="154.3" y="313.9" font-family="Liberation Sans" font-size="6.3" fill="#a0a0a0" text-anchor="middle">2</text>
<rect x="153.7" y="324.3" width="1.2" height="1.2" fill="#444"/>
<rect x="150" y="327.3" width="8.5" height="14.2" fill="#c8c8c8"/>

<rect x="150" y="341.5" width="8.5" height="68.0" fill="#fff"/>
<rect x="153.7" y="353.4" width="1.2" height="1.2" fill="#444"/>
<text x="154.3" y="369.6" font-family="Liberation Sans" font-size="6.3" fill="#a0a0a0" text-anchor="middle">1</text>
<rect x="153.7" y="380.0" width="1.2" height="1.2" fill="#444"/>
<text x="154.3" y="396.2" font-family="Liberation Sans" font-size="6.3" fill="#a0a0a0" text-anchor="middle">2</text>
<rect x="153.7" y="406.6" width="1.2" height="1.2" fill="#444"/>
<rect x="150" y="409.5" width="8.5" height="40.0" fill="#c8c8c8"/>
<rect x="153.7" y="421.4" width="1.2" height="1.2" fill="#444"/>
<text x="154.3" y="437.6" font-family="Liberation Sans" font-size="6.3" fill="#a0a0a0" text-anchor="middle">1</text>
</svg>

<div class="a" style="left:167px;top:109px;width:576px;height:341px;background:#fff;border-left:1px solid #d6d6d6;border-top:1px solid #d6d6d6;border-right:1px solid #c6c6c6;border-bottom:1px solid #c6c6c6;box-shadow:1px 1px 1px rgba(0,0,0,0.07)"></div>
<div class="a grid" style="left:168px;top:110px;width:574px;height:39.50px;background-position:7.00px 0,7.00px 0,0 0"></div>
<div class="a grid" style="left:168px;top:163.5px;width:574px;height:81.50px;background-position:7.00px 0,7.00px 0,0 0"></div>
<div class="a grid" style="left:168px;top:259.2px;width:574px;height:68.10px;background-position:7.00px 0,7.00px 0,0 0"></div>
<div class="a grid" style="left:168px;top:341.5px;width:574px;height:107.50px;background-position:7.00px 0,7.00px 0,0 0"></div>
<div class="a" style="left:168px;top:149.5px;width:575px;height:14.0px;background:#f1f1f1;border-top:1px solid #dadada;border-bottom:1px solid #d2d2d2"></div>
<svg class="a" style="left:170px;top:149.5px" width="30" height="14" viewBox="170 149.5 30 14.0"><path d="M172.6 153.9 H177.6 L175.1 158.1 Z" fill="#555"/><rect x="182.6" y="151.5" width="8.4" height="10" fill="#fff" stroke="#7aa5dc" stroke-width="0.9"/><rect x="183.6" y="152.5" width="6.4" height="2.6" fill="#f08a3a"/></svg>
<div class="t hd" style="left:195px;top:153.2px">PageHeader [una sección por página]</div>
<div class="a" style="left:168px;top:245px;width:575px;height:14.2px;background:#d3d3d3;border-top:1px solid #dadada;border-bottom:1px solid #d2d2d2"></div>
<svg class="a" style="left:170px;top:245px" width="30" height="14" viewBox="170 245 30 14.2"><path d="M172.6 249.5 H177.6 L175.1 253.7 Z" fill="#555"/><rect x="182.6" y="247.1" width="8.4" height="10" fill="#f4f4f4" stroke="#7aa5dc" stroke-width="0.9"/><path d="M184.5 249.6 H189 M184.5 252.1 H189 M184.5 254.6 H189" stroke="#9aa" stroke-width="0.7"/></svg>
<div class="t hd" style="left:195px;top:248.8px">Detail</div>
<div class="a" style="left:168px;top:327.3px;width:575px;height:14.2px;background:#f1f1f1;border-top:1px solid #dadada;border-bottom:1px solid #d2d2d2"></div>
<svg class="a" style="left:170px;top:327.3px" width="30" height="14" viewBox="170 327.3 30 14.2"><path d="M172.6 331.8 H177.6 L175.1 336.0 Z" fill="#555"/><rect x="182.6" y="329.4" width="8.4" height="10.5" rx="0.8" fill="#fff" stroke="#7aa5dc" stroke-width="0.9"/><rect x="184.2" y="328.4" width="5.2" height="2" fill="#8ab0e0"/><rect x="183.6" y="335.4" width="6.4" height="3.4" fill="#7cc040"/></svg>
<div class="t hd" style="left:195px;top:331.1px">PageFooter [una sección por página]</div>
<svg class="a" style="left:0;top:0" width="800" height="576" viewBox="0 0 800 576">
<line x1="208.5" y1="110" x2="208.5" y2="149.5" stroke="#999" stroke-width="1" stroke-dasharray="2 1.5"/>
<line x1="702.5" y1="110" x2="702.5" y2="149.5" stroke="#999" stroke-width="1" stroke-dasharray="2 1.5"/>
<line x1="208.5" y1="163.5" x2="208.5" y2="245" stroke="#999" stroke-width="1" stroke-dasharray="2 1.5"/>
<line x1="702.5" y1="163.5" x2="702.5" y2="245" stroke="#999" stroke-width="1" stroke-dasharray="2 1.5"/>
<line x1="208.5" y1="259.2" x2="208.5" y2="327.3" stroke="#999" stroke-width="1" stroke-dasharray="2 1.5"/>
<line x1="702.5" y1="259.2" x2="702.5" y2="327.3" stroke="#999" stroke-width="1" stroke-dasharray="2 1.5"/>
<line x1="208.5" y1="341.5" x2="208.5" y2="449" stroke="#999" stroke-width="1" stroke-dasharray="2 1.5"/>
<line x1="702.5" y1="341.5" x2="702.5" y2="449" stroke="#999" stroke-width="1" stroke-dasharray="2 1.5"/>
<line x1="168" y1="409.5" x2="743" y2="409.5" stroke="#aaa" stroke-width="1" stroke-dasharray="2 1.5"/>
</svg>

<!-- report controls -->
<div class="a" style="left:345px;top:167px;width:271px;height:14px;border:1px solid #bdbdbd;border-top-color:#d8d8d8"></div>
<div class="t" style="left:345px;top:164.8px;width:271px;text-align:center;font:bold 12.3px 'Liberation Serif',serif;color:#1515d0">[Obra.ConcursanteNombre]</div>
<div class="a" style="left:345px;top:184px;width:271px;height:15px;border:1px solid #bdbdbd"></div>
<div class="t" style="left:345px;top:183.2px;width:271px;text-align:center;font:9.5px 'Liberation Serif',serif;color:#222">[Obra.ClienteNombre]</div>
<div class="a" style="left:275px;top:200px;width:71px;height:17px;border:1px solid #e2e2e2;background:rgba(255,255,255,0.6)"></div>
<div class="t" style="left:277px;top:201px;font:9.1px 'Liberation Serif',serif;color:#222">Concurso No.:</div>
<div class="a" style="left:345px;top:200px;width:167px;height:17px;border:1px solid #d0d0d0;border-left:2px solid #c4c4c4;background:rgba(255,255,255,0.6)"></div>
<div class="t" style="left:347px;top:200px;font:bold 10px 'Liberation Serif',serif;color:#111">[Obra.ConcursoNumero]</div>
<div class="a" style="left:275px;top:219px;width:48px;height:15px;background:rgba(240,160,175,0.38);border:1px solid #e8a8b4"></div>
<div class="a" style="left:322px;top:219px;width:294px;height:23px;background:rgba(240,160,175,0.38);border:1px solid #e8a8b4"></div>
<div class="t" style="left:277px;top:218px;font:10px 'Liberation Serif',serif;color:#222">Proyecto:</div>
<div class="t" style="left:323.6px;top:218px;font:10px 'Liberation Serif',serif;color:#222">[Obra.ObraDescripcion]</div>
<div class="a" style="left:647.5px;top:204px;width:22.5px;height:13px;border:1px solid #d0d0d0;background:#fff"></div>
<div class="t" style="left:648.7px;top:202.6px;font:10px 'Liberation Serif',serif;color:#111">Hoja</div>
<div class="a" style="left:673px;top:204px;width:30px;height:16.5px;border:1px solid #d0d0d0;background:#fff"></div>
<div class="t" style="left:675.5px;top:205px;font:8px 'Liberation Serif',serif;color:#111">1/1</div>
<!-- footer controls -->
<div class="a" style="left:357px;top:349.3px;width:225px;height:14.2px;border:1px solid #cfcfcf"></div>
<div class="t" style="left:357px;top:348px;width:225px;text-align:center;font:bold 10.9px 'Liberation Serif',serif;color:#111;padding-right:3px">[Obra.ConcursanteNombreRepresentante]</div>
<div class="a" style="left:375.4px;top:387.8px;width:180px;height:14.2px;border:1px solid #cfcfcf"></div>
<div class="t" style="left:375.4px;top:387px;width:180px;text-align:center;font:10.15px 'Liberation Serif',serif;color:#222">[Obra.ConcursanteCargoRepresentante]</div>
<!-- smart tags -->
<svg class="a" style="left:0;top:0" width="800" height="576" viewBox="0 0 800 576">
<defs><linearGradient id="tagG" x1="0" y1="0" x2="1" y2="0"><stop offset="0" stop-color="#f6c542"/><stop offset="1" stop-color="#c98a10"/></linearGradient></defs>
<g fill="url(#tagG)" stroke="#9a6a10" stroke-width="0.5">
<rect x="608.2" y="167" width="5.6" height="5.6" rx="1.3"/>
<rect x="608.2" y="184.6" width="5.6" height="6.2" rx="1.3"/>
<rect x="505.2" y="202.4" width="5.6" height="6.4" rx="1.3"/>
<rect x="608.2" y="219.4" width="5.6" height="6.4" rx="1.3"/>
<rect x="574.8" y="350" width="5.6" height="6" rx="1.3"/>
<rect x="549.2" y="388.6" width="5.4" height="5.8" rx="1.3"/>
</g>
</svg>
<!-- logo -->
<svg class="a" style="left:208px;top:164px" width="67" height="77" viewBox="0 0 67 77">
<defs>
<linearGradient id="lgG" x1="0" y1="0" x2="0" y2="1"><stop offset="0" stop-color="#279a45"/><stop offset="1" stop-color="#0e7a2f"/></linearGradient>
<radialGradient id="glb" cx="0.5" cy="0.5" r="0.5"><stop offset="0" stop-color="#ffffff"/><stop offset="0.7" stop-color="#f4faf5"/><stop offset="1" stop-color="#a8d4b2"/></radialGradient>
<clipPath id="gclip"><ellipse cx="34.4" cy="26" rx="24.4" ry="20"/></clipPath>
</defs>
<rect width="67" height="77" fill="url(#lgG)"/>
<ellipse cx="34.4" cy="26" rx="24.4" ry="20" fill="url(#glb)"/>
<g clip-path="url(#gclip)" stroke="#3d9f58" fill="none" stroke-width="3.1"><path d="M-5 15.5 L70 -22.7"/><path d="M-5 23.5 L70 -14.7"/><path d="M-5 31.5 L70 -6.7"/><path d="M-5 39.5 L70 1.3"/><path d="M-5 47.5 L70 9.3"/><path d="M-5 55.5 L70 17.3"/><path d="M-5 63.6 L70 25.3"/><path d="M0 20.2 H70 M0 30.6 H70" stroke-width="0.8"/></g>
<text x="33.8" y="64.2" text-anchor="middle" font-family="Liberation Sans" font-weight="bold" font-size="16.8" fill="#fff" letter-spacing="0.9">IKUSI</text>
<text x="59" y="71.3" text-anchor="end" font-family="Liberation Sans" font-weight="bold" font-size="7" fill="#fff" letter-spacing="0.5">velatia</text>
</svg>
<!-- red dashed marks -->
<svg class="a" style="left:0;top:0" width="800" height="576" viewBox="0 0 800 576"><path fill="none" stroke="#f00" stroke-width="3.2" d="M177 188.9 V172 Q177 166.4 182.5 166.4 H183 M186.95 166.4 H198.15 M203.80 166.4 H215.00 M220.65 166.4 H231.85 M237.50 166.4 H248.70 M254.35 166.4 H265.55 M271.20 166.4 H282.40 M288.05 166.4 H299.25 M304.90 166.4 H316.10 M321.75 166.4 H332.95 M338.60 166.4 H349.80 M355.45 166.4 H366.65 M372.30 166.4 H383.50 M389.15 166.4 H400.35 M406.00 166.4 H417.20 M422.85 166.4 H434.05 M439.70 166.4 H450.90 M456.55 166.4 H467.75 M473.40 166.4 H484.60 M490.25 166.4 H501.45 M507.10 166.4 H518.30 M523.95 166.4 H535.15 M540.80 166.4 H552.00 M557.65 166.4 H568.85 M574.50 166.4 H585.70 M591.35 166.4 H602.55 M608.20 166.4 H619.40 M625.05 166.4 H636.25 M641.90 166.4 H653.10 M658.75 166.4 H669.95 M675.60 166.4 H686.80 M692.45 166.4 H697.5 Q701.5 166.4 701.5 170 V171.5 M701.5 174.80 V186.00 M701.5 191.65 V202.85 M701.5 208.50 V219.70 M701.5 225.35 V236.55 M701.5 239 Q701.5 242.2 698 242.2 H686.25 M180.10 242.2 H191.30 M196.95 242.2 H208.15 M213.80 242.2 H225.00 M230.65 242.2 H241.85 M247.50 242.2 H258.70 M264.35 242.2 H275.55 M281.20 242.2 H292.40 M298.05 242.2 H309.25 M314.90 242.2 H326.10 M331.75 242.2 H342.95 M348.60 242.2 H359.80 M365.45 242.2 H376.65 M382.30 242.2 H393.50 M399.15 242.2 H410.35 M416.00 242.2 H427.20 M432.85 242.2 H444.05 M449.70 242.2 H460.90 M466.55 242.2 H477.75 M483.40 242.2 H494.60 M500.25 242.2 H511.45 M517.10 242.2 H528.30 M533.95 242.2 H545.15 M550.80 242.2 H562.00 M567.65 242.2 H578.85 M584.50 242.2 H595.70 M601.35 242.2 H612.55 M618.20 242.2 H629.40 M635.05 242.2 H646.25 M651.90 242.2 H663.10 M668.75 242.2 H679.95 M177 194.00 V205.20 M177 210.85 V222.05 M177 227.70 V238.90 M177 353.1 V350.5 Q177 345.6 181.5 345.6 M185.10 345.6 H196.30 M201.95 345.6 H213.15 M218.80 345.6 H230.00 M235.65 345.6 H246.85 M252.50 345.6 H263.70 M269.35 345.6 H280.55 M286.20 345.6 H297.40 M303.05 345.6 H314.25 M319.90 345.6 H331.10 M336.75 345.6 H347.95 M353.60 345.6 H364.80 M370.45 345.6 H381.65 M387.30 345.6 H398.50 M404.15 345.6 H415.35 M421.00 345.6 H432.20 M437.85 345.6 H449.05 M454.70 345.6 H465.90 M471.55 345.6 H482.75 M488.40 345.6 H499.60 M505.25 345.6 H516.45 M522.10 345.6 H533.30 M538.95 345.6 H550.15 M555.80 345.6 H567.00 M572.65 345.6 H583.85 M589.50 345.6 H600.70 M606.35 345.6 H617.55 M623.20 345.6 H634.40 M640.05 345.6 H651.25 M656.90 345.6 H668.10 M673.75 345.6 H684.95 M690.6 345.6 H698.5 Q701.5 345.6 701.5 348.8 M701.5 351.90 V363.10 M701.5 368.75 V379.95 M701.5 385.60 V396.80 M701.5 401.9 V403 Q701.5 406.4 698 406.4 H686 M180.10 406.4 H191.30 M196.95 406.4 H208.15 M213.80 406.4 H225.00 M230.65 406.4 H241.85 M247.50 406.4 H258.70 M264.35 406.4 H275.55 M281.20 406.4 H292.40 M298.05 406.4 H309.25 M314.90 406.4 H326.10 M331.75 406.4 H342.95 M348.60 406.4 H359.80 M365.45 406.4 H376.65 M382.30 406.4 H393.50 M399.15 406.4 H410.35 M416.00 406.4 H427.20 M432.85 406.4 H444.05 M449.70 406.4 H460.90 M466.55 406.4 H477.75 M483.40 406.4 H494.60 M500.25 406.4 H511.45 M517.10 406.4 H528.30 M533.95 406.4 H545.15 M550.80 406.4 H562.00 M567.65 406.4 H578.85 M584.50 406.4 H595.70 M601.35 406.4 H612.55 M618.20 406.4 H629.40 M635.05 406.4 H646.25 M651.90 406.4 H663.10 M668.75 406.4 H679.95 M177 358.75 V369.95 M177 375.60 V386.80 M177 392.45 V403.65"/></svg>



<!-- blue bar + taskbar -->
<div class="a" style="left:0;top:528px;width:800px;height:19px;background:#1c4789"></div>
<div class="a" style="left:0;top:547px;width:800px;height:29px;background:#03080c"></div>
<div class="a" style="left:33px;top:547px;width:242px;height:29px;background:#3b3b3b"></div>
<div class="t" style="left:41px;top:557px;font-size:9.8px;color:#c9c9c9">Buscar en la web y en Windows</div>
<svg class="a" style="left:0;top:547px" width="800" height="29" viewBox="0 547 800 29">
<defs>
<linearGradient id="fold" x1="0" y1="0" x2="0" y2="1"><stop offset="0" stop-color="#f8dc8a"/><stop offset="1" stop-color="#e6b84a"/></linearGradient>
<linearGradient id="scr" x1="0" y1="0" x2="0" y2="1"><stop offset="0" stop-color="#3aa0e8"/><stop offset="1" stop-color="#1868b8"/></linearGradient>
</defs>
<!-- win logo -->
<path d="M10.9 556.6 L14.6 556.1 V565.9 L10.9 565.5 Z" fill="#fff"/>
<path d="M15.7 556 L22.1 555.2 V566.9 L15.7 566 Z" fill="#fff"/>
<!-- task view -->
<path d="M288 556 H296 V558 M288 556 V558 M285.5 559 V565.5 H287 M296.5 559 H298.5 V565.5 H296.5 M296.5 559 V567" stroke="#fff" stroke-width="1.1" fill="none"/>
<!-- edge -->
<path d="M321 561.5 C321 557 324 554.5 328 554.5 C332 554.5 334.4 557 334.4 561.6 H324.6 C324.8 564.2 326.6 565.6 329 565.6 C330.8 565.6 332.4 565 333.8 564.2 V567.6 C332.3 568.3 330.6 568.8 328.6 568.8 C323.8 568.8 321 566 321 561.5 Z M324.7 559.2 H330.6 C330.5 557.6 329.4 556.9 327.8 556.9 C326.3 556.9 325.1 557.8 324.7 559.2 Z" fill="#1a84e0"/>
<!-- folder (explorer) -->
<path d="M353.6 556 H359 L360.5 557.5 H370 V567.6 H353.6 Z" fill="url(#fold)"/>
<rect x="353.6" y="559" width="16.4" height="8.6" fill="#f2cd6a"/>
<path d="M357.5 567.6 V563.5 H366 V567.6 H364 V565.2 H359.5 V567.6 Z" fill="#2a9ae8"/>
<rect x="358" y="562.6" width="7.6" height="1.6" fill="#3cb0f0"/>
<rect x="348.4" y="574" width="27" height="2" fill="#7eb0e0"/>
<!-- store -->
<path d="M388.8 558 H403 V569.8 H388.8 Z" fill="#fff"/>
<path d="M392.5 558 V555.4 Q395.9 552 399.3 555.4 V558" stroke="#fff" stroke-width="1.2" fill="none"/>
<path d="M391 560.5 H395.2 V564 H391 Z M396.4 560.5 H400.8 V564 H396.4 Z M391 565 H395.2 V568.3 H391 Z M396.4 565 H400.8 V568.3 H396.4 Z" fill="#03080c"/>
<!-- folder 2 -->
<path d="M424.6 555 H428.5 L430 556.5 H434 V569 H424.6 Z" fill="url(#fold)"/>
<rect x="429" y="560" width="8" height="8" fill="#dfe6ee" stroke="#8a98a8" stroke-width="0.5"/>
<rect x="430.5" y="562" width="5" height="3.5" fill="#6aa8d8"/>
<!-- folder 3 -->
<path d="M458.8 555 H462.5 L464 556.5 H467 V569 H458.8 Z" fill="url(#fold)"/>
<rect x="462.5" y="561" width="10.6" height="7.6" fill="#d8e4ee" stroke="#8898a8" stroke-width="0.5"/>
<path d="M463.5 567.6 L466.5 564 L469 566 L471 564.5 L472.5 567.6 Z" fill="#5a9a5a"/>
<rect x="463.2" y="561.8" width="9" height="2.4" fill="#8cc0e8"/>
<!-- control panel -->
<rect x="491" y="556" width="15" height="10" fill="#2a8ee0"/>
<rect x="492.2" y="557.2" width="12.6" height="7.6" fill="#9fd0f5"/>
<circle cx="496.5" cy="561" r="2.6" fill="#2a7ed0"/><circle cx="496.5" cy="561" r="1.3" fill="#ffd24a"/>
<rect x="500" y="558.5" width="4" height="1" fill="#fff"/><rect x="500" y="560.5" width="4" height="1" fill="#fff"/>
<rect x="493" y="564" width="11" height="1.2" fill="#f0a020"/>
<!-- network pc -->
<path d="M529 555 L541.5 557 V566 L529 564 Z" fill="#4ab0f0"/>
<path d="M525.8 566.5 L533 564.8 L538 567 L531 569 Z" fill="#d8dde2"/>
<path d="M529 555 L531 555.5 V564.5 L529 564 Z" fill="#1a78c0"/>
<!-- home -->
<path d="M560 562.2 L567.8 555 L575.6 562.2 H573.3 V568 H569.5 V564.5 H566.1 V568 H562.3 V562.2 Z" fill="#fff"/>
<!-- mail blue square -->
<rect x="594" y="554" width="15" height="15" rx="1" fill="#2ea3ee"/>
<path d="M597.5 558.5 H605.5 V565 H597.5 Z" fill="#fff"/>
<path d="M597.5 558.5 L601.5 561.8 L605.5 558.5" stroke="#2ea3ee" stroke-width="0.8" fill="none"/>
<path d="M594 569 L609 554 V569 Z" fill="#2a90da" opacity="0.5"/>
<!-- monitor -->
<rect x="627.6" y="553" width="17.5" height="12.5" fill="#e8eef4"/>
<rect x="628.8" y="554.2" width="15.1" height="10.1" fill="url(#scr)"/>
<rect x="630.5" y="558" width="11" height="1" fill="#cfe8fa"/>
<path d="M634.5 565.5 H638.5 L639.5 568.2 H633.5 Z" fill="#e8eef4"/>
<rect x="631.5" y="568.2" width="10" height="1.5" fill="#e8eef4"/>
<!-- circle -->
<circle cx="670.9" cy="561.5" r="7.8" fill="#2b3438"/>
<circle cx="670.9" cy="561.5" r="6.2" fill="none" stroke="#6ab020" stroke-width="1.2"/>
<circle cx="670.9" cy="561.5" r="3.6" fill="none" stroke="#4a6a40" stroke-width="0.9"/>
<rect x="691.2" y="574" width="27.8" height="2" fill="#7eb0e0"/>
<!-- calculator -->
<rect x="698.8" y="552.8" width="12.7" height="17.2" fill="#fff"/>
<rect x="700.2" y="554.3" width="9.8" height="3.4" fill="#03080c"/>
<g fill="#03080c">
<rect x="701" y="559.3" width="1.6" height="1.6"/><rect x="704.3" y="559.3" width="1.6" height="1.6"/><rect x="707.6" y="559.3" width="1.6" height="1.6"/>
<rect x="701" y="562.6" width="1.6" height="1.6"/><rect x="704.3" y="562.6" width="1.6" height="1.6"/><rect x="707.6" y="562.6" width="1.6" height="1.6"/>
<rect x="701" y="565.9" width="1.6" height="1.6"/><rect x="704.3" y="565.9" width="1.6" height="1.6"/><rect x="707.6" y="565.9" width="1.6" height="1.6"/>
</g>
<!-- skype -->
<circle cx="733.8" cy="557.2" r="3.4" fill="#14a0ea"/><circle cx="745" cy="568" r="3.4" fill="#14a0ea"/>
<circle cx="739.4" cy="562.5" r="7.6" fill="#14a0ea"/>
<text x="739.4" y="567.4" text-anchor="middle" font-family="Liberation Sans" font-weight="bold" font-size="13" fill="#fff">S</text>
<circle cx="746.5" cy="569.5" r="2.4" fill="#ffb020" stroke="#03080c" stroke-width="0.6"/>
<rect x="725" y="574" width="27.8" height="2" fill="#7eb0e0"/>
<!-- excel -->
<path d="M764.8 555.5 L773.5 554 V568.4 L764.8 567 Z" fill="#1f7a40"/>
<rect x="773" y="556" width="7.3" height="11" fill="#fff" stroke="#1f7a40" stroke-width="1"/>
<path d="M775 558.5 H778.5 M775 561 H778.5 M775 563.5 H778.5" stroke="#1f7a40" stroke-width="0.8"/>
<text x="766.2" y="565.4" font-family="Liberation Sans" font-weight="bold" font-size="8" fill="#fff">X</text>
<rect x="758.8" y="574" width="20.6" height="2" fill="#7eb0e0"/><rect x="779.6" y="574" width="12" height="2" fill="#5a8cc0"/>
<rect x="793.4" y="574" width="6.6" height="2" fill="#7eb0e0"/>
</svg>

</body></html>
